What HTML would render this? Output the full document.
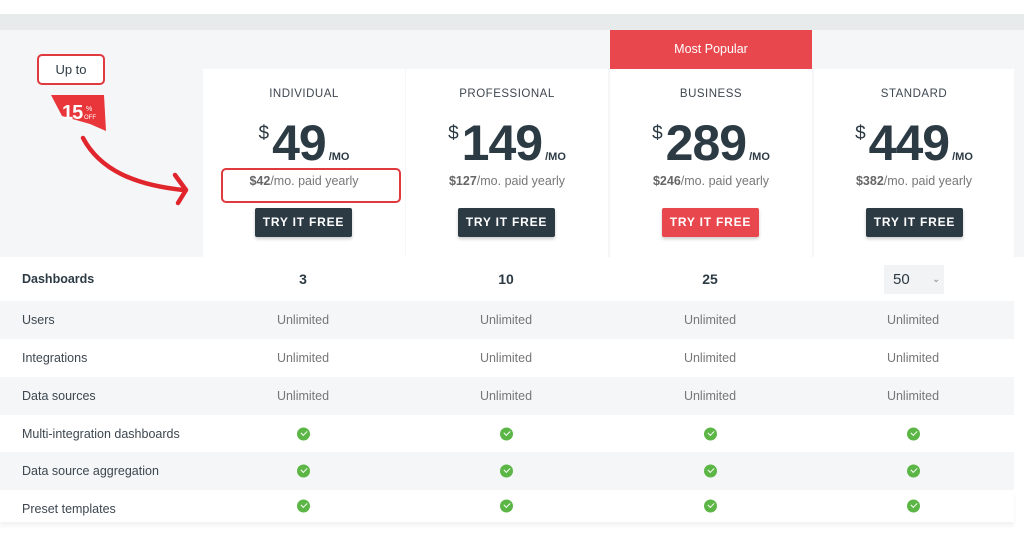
<!DOCTYPE html>
<html><head><meta charset="utf-8"><style>
*{margin:0;padding:0;box-sizing:border-box}
body{width:1024px;height:536px;background:#fff;font-family:"Liberation Sans",sans-serif;color:#2c3a44;position:relative;overflow:hidden}
.abs{position:absolute}
.card{position:absolute;top:69px;width:202px;height:188px;background:#fff;text-align:center}
.name{position:absolute;top:19px;width:100%;font-size:11.5px;letter-spacing:.5px;color:#3d4750}
.price{position:absolute;top:46px;width:100%;text-align:center;white-space:nowrap}
.price .d{font-size:19px;vertical-align:top;position:relative;top:8px;margin-right:3px}
.price .n{font-size:50px;font-weight:bold;letter-spacing:-1px;line-height:56px}
.price .m{font-size:11px;font-weight:bold;margin-left:3px}
.yr{position:absolute;top:105px;width:100%;font-size:12.5px;color:#777}
.yr b{color:#666;font-weight:bold}
.btn{position:absolute;top:139px;left:52px;width:97px;height:29px;background:#2c3a44;color:#fff;font-weight:bold;font-size:12px;letter-spacing:.8px;line-height:29px;border-radius:2px;box-shadow:0 2px 3px rgba(0,0,0,.2)}
.row{position:absolute;left:0;width:1014px;font-size:12.5px;color:#3d4750}
.row span{position:absolute;top:50%;transform:translateY(-50%)}
.row .l{left:22px}
.c{width:80px;margin-left:-40px;text-align:center;color:#777}
.ck{width:13px;height:13px;border-radius:50%;background:#5cb646;margin-left:-6px;display:block}
.ck::after{content:"";position:absolute;left:3.5px;top:3px;width:5px;height:3px;border-left:1.6px solid #fff;border-bottom:1.6px solid #fff;transform:rotate(-45deg)}
</style></head><body>
<div class="abs" style="left:0;top:14px;width:1024px;height:16px;background:#e8ebec"></div>
<div class="abs" style="left:0;top:30px;width:1024px;height:227px;background:#f4f6f7"></div>
<div class="abs" style="left:610px;top:30px;width:202px;height:39px;background:#e8474e;font-size:12.5px;text-align:center;line-height:39px;color:#fff">Most Popular</div>

<div class="abs" style="left:37px;top:54px;width:68px;height:31px;border:2px solid #e03a3e;border-radius:5px;background:#fff;font-size:13px;text-align:center;line-height:27px">Up to</div>
<svg class="abs" style="left:50px;top:94px" width="58" height="38"><polygon points="1,1 54,1 56,37 40,30 12,22" fill="#e8363a"/><text x="12" y="25" font-size="20" font-weight="bold" fill="#fff" font-family="Liberation Sans" letter-spacing="-1">15</text><text x="36" y="17" font-size="7" fill="#fff" font-family="Liberation Sans">%</text><text x="34" y="25" font-size="6" fill="#fff" font-family="Liberation Sans">OFF</text></svg>
<svg class="abs" style="left:75px;top:130px" width="120" height="80"><path d="M8 8 C25 40 60 55 108 60" stroke="#e0262c" stroke-width="4.5" fill="none" stroke-linecap="round"/><path d="M100 45 L111 60 L103 73" stroke="#e0262c" stroke-width="4.5" fill="none" stroke-linecap="round" stroke-linejoin="round"/></svg>

<div class="card" style="left:203px"><div class="name">INDIVIDUAL</div><div class="price"><span class="d">$</span><span class="n">49</span><span class="m">/MO</span></div><div class="yr"><b>$42</b>/mo. paid yearly</div><div class="btn">TRY IT FREE</div></div>
<div class="abs" style="left:221px;top:168px;width:180px;height:35px;border:2px solid #e03a3e;border-radius:5px"></div>
<div class="card" style="left:406px"><div class="name">PROFESSIONAL</div><div class="price"><span class="d">$</span><span class="n">149</span><span class="m">/MO</span></div><div class="yr"><b>$127</b>/mo. paid yearly</div><div class="btn">TRY IT FREE</div></div>
<div class="card" style="left:610px"><div class="name">BUSINESS</div><div class="price"><span class="d">$</span><span class="n">289</span><span class="m">/MO</span></div><div class="yr"><b>$246</b>/mo. paid yearly</div><div class="btn" style="background:#e8474e">TRY IT FREE</div></div>
<div class="card" style="left:814px;width:200px"><div class="name">STANDARD</div><div class="price"><span class="d">$</span><span class="n">449</span><span class="m">/MO</span></div><div class="yr"><b>$382</b>/mo. paid yearly</div><div class="btn">TRY IT FREE</div></div>

<div class="row" style="top:257px;height:44px;background:#fff;font-weight:bold"><span class="l" style="color:#2c3a44">Dashboards</span><span class="c" style="left:303px;color:#2c3a44;font-size:14px">3</span><span class="c" style="left:506px;color:#2c3a44;font-size:14px">10</span><span class="c" style="left:710px;color:#2c3a44;font-size:14px">25</span></div>
<div class="abs" style="left:884px;top:265px;width:60px;height:29px;background:#f1f3f4;font-size:15px;line-height:29px;padding-left:9px">50<span style="position:absolute;left:48px;font-size:10px;color:#888">⌄</span></div>
<div class="row" style="top:301px;height:38px;background:#f4f6f7"><span class="l">Users</span><span class="c" style="left:303px">Unlimited</span><span class="c" style="left:506px">Unlimited</span><span class="c" style="left:710px">Unlimited</span><span class="c" style="left:913px">Unlimited</span></div>
<div class="row" style="top:339px;height:38px;background:#fff"><span class="l">Integrations</span><span class="c" style="left:303px">Unlimited</span><span class="c" style="left:506px">Unlimited</span><span class="c" style="left:710px">Unlimited</span><span class="c" style="left:913px">Unlimited</span></div>
<div class="row" style="top:377px;height:38px;background:#f4f6f7"><span class="l">Data sources</span><span class="c" style="left:303px">Unlimited</span><span class="c" style="left:506px">Unlimited</span><span class="c" style="left:710px">Unlimited</span><span class="c" style="left:913px">Unlimited</span></div>
<div class="row" style="top:415px;height:37px;background:#fff"><span class="l">Multi-integration dashboards</span><span class="ck" style="left:303px"></span><span class="ck" style="left:506px"></span><span class="ck" style="left:710px"></span><span class="ck" style="left:913px"></span></div>
<div class="row" style="top:452px;height:38px;background:#f4f6f7"><span class="l">Data source aggregation</span><span class="ck" style="left:303px"></span><span class="ck" style="left:506px"></span><span class="ck" style="left:710px"></span><span class="ck" style="left:913px"></span></div>
<div class="row" style="top:490px;height:32px;background:#fff;box-shadow:0 4px 4px rgba(0,0,0,.05)"><span class="l" style="top:58%">Preset templates</span><span class="ck" style="left:303px"></span><span class="ck" style="left:506px"></span><span class="ck" style="left:710px"></span><span class="ck" style="left:913px"></span></div>
</body></html>
